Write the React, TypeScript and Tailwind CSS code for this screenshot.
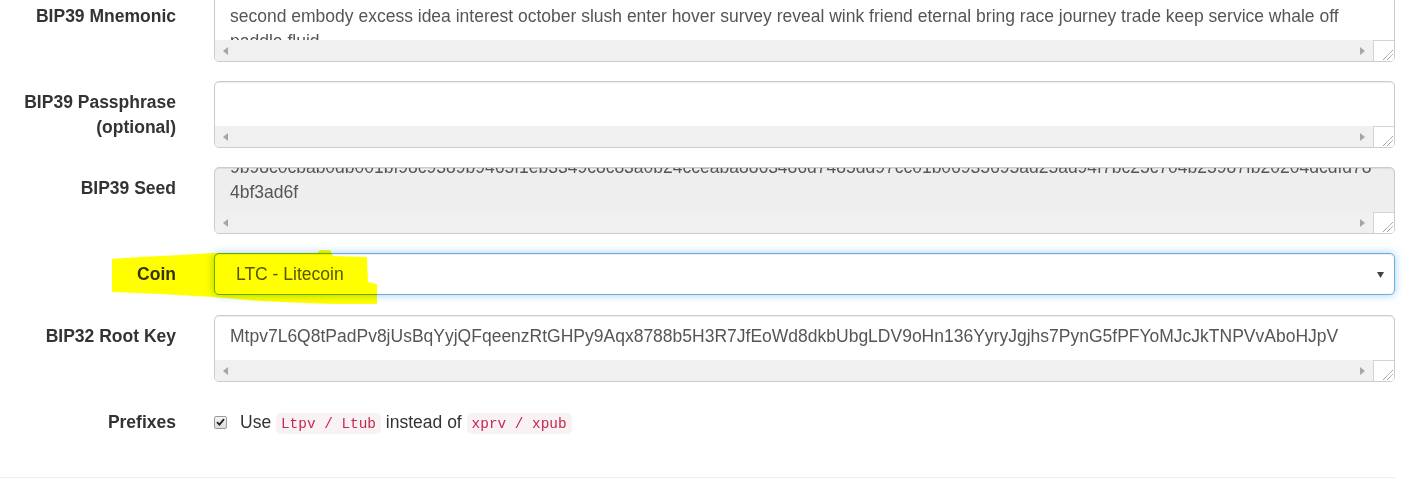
import type { ReactNode } from "react";

const MNEMONIC =
  "second embody excess idea interest october slush enter hover survey reveal wink friend eternal bring race journey trade keep service whale off paddle fluid";
const SEED_LINE =
  "9b98c0cbab0db001bf98c9389b9465f1eb3349c8c83a0b24cceaba8863486d7485dd97cc01b06935695ad25ad94f7bc25c704b25987fb20204dcdfd78";
const ROOT_KEY =
  "Mtpv7L6Q8tPadPv8jUsBqYyjQFqeenzRtGHPy9Aqx8788b5H3R7JfEoWd8dkbUbgLDV9oHn136YyryJgjhs7PynG5fPFYoMJcJkTNPVvAboHJpV";

export default function App() {
  return (
    <div className="relative h-[479px] w-[1408px] overflow-hidden bg-white font-['Liberation_Sans',Arial,sans-serif] text-[17.5px] leading-[25px] text-[#333]">
      <div className="-mt-[5px]">
        <FormRow label="BIP39 Mnemonic">
          <TextBox>
            <div className="px-[15px] pt-[7.5px] text-[#555]">{MNEMONIC}</div>
          </TextBox>
        </FormRow>

        <FormRow label={<>BIP39 Passphrase<br />(optional)</>}>
          <TextBox>
            <div />
          </TextBox>
        </FormRow>

        <FormRow label="BIP39 Seed">
          <TextBox readOnly>
            <div className="-mt-[13.5px] px-[15px] text-[#555]">
              <div className="overflow-hidden whitespace-nowrap">{SEED_LINE}</div>
              <div>4bf3ad6f</div>
            </div>
          </TextBox>
        </FormRow>

        <FormRow label="Coin" gap="mb-[20px]">
          <div className="relative flex h-[42px] items-center rounded-[5px] border border-[#66afe9] bg-white pl-[21px] text-[#555] shadow-[inset_0_1px_1px_rgba(0,0,0,0.075),0_0_8px_rgba(102,175,233,0.6)]">
            LTC - Litecoin
            <svg className="absolute right-[10px] top-[18px]" width="7" height="6" viewBox="0 0 7 6">
              <path d="M0 0 L7 0 L3.5 6 Z" fill="#444" />
            </svg>
          </div>
        </FormRow>

        <FormRow label="BIP32 Root Key">
          <TextBox>
            <div className="overflow-hidden whitespace-nowrap px-[15px] pt-[7.5px] text-[#555]">{ROOT_KEY}</div>
          </TextBox>
        </FormRow>

        <FormRow label="Prefixes" gap="mb-0">
          <div className="flex h-[42px] items-start pt-[8.75px]">
            <span className="mt-[6px] flex h-[13px] w-[13px] items-center justify-center rounded-[2px] border border-[#9a9a9a] bg-gradient-to-b from-[#f4f4f4] to-[#dcdcdc]">
              <svg width="9" height="8" viewBox="0 0 9 8">
                <path d="M1 4.2 L3.4 6.6 L8 1.2" fill="none" stroke="#222" strokeWidth="1.8" />
              </svg>
            </span>
            <span className="ml-[13px]">
              Use <Code>Ltpv / Ltub</Code> instead of <Code>xprv / xpub</Code>
            </span>
          </div>
        </FormRow>

        <div className="mr-[13px] mt-[34px] h-px bg-[#eee]" />
      </div>

      <svg className="pointer-events-none absolute left-0 top-0 mix-blend-multiply" width="1408" height="479">
        <polygon
          fill="#ffff00"
          points="112,259 140,257 180,255 213,253 317,253 320,250 330,250 333,256 367,257 368,282 377,284 377,304 330,304 260,301 213,297 160,294 112,292"
        />
      </svg>
    </div>
  );
}

function FormRow({ label, children, gap = "mb-[19px]" }: { label: ReactNode; children: ReactNode; gap?: string }) {
  return (
    <div className={`flex ${gap}`}>
      <label className="w-[176px] shrink-0 pt-[8.75px] text-right font-bold">{label}</label>
      <div className="ml-[38px] mr-[13px] min-w-0 flex-1">{children}</div>
    </div>
  );
}

function TextBox({ children, readOnly }: { children: ReactNode; readOnly?: boolean }) {
  return (
    <div
      className={`flex h-[67px] flex-col overflow-hidden rounded-[5px] border border-[#ccc] shadow-[inset_0_1px_1px_rgba(0,0,0,0.075)] ${
        readOnly ? "bg-[#eee]" : "bg-white"
      }`}
    >
      <div className="min-h-0 flex-1 overflow-hidden">{children}</div>
      <ScrollStrip />
    </div>
  );
}

function ScrollStrip() {
  return (
    <div className="flex h-[21px] shrink-0 items-center bg-[#f0f0f0]">
      <svg className="ml-[8px]" width="5" height="8" viewBox="0 0 5 8">
        <path d="M5 0 L0 4 L5 8 Z" fill="#a6a6a6" />
      </svg>
      <div className="flex-1" />
      <svg className="mr-[8px]" width="5" height="8" viewBox="0 0 5 8">
        <path d="M0 0 L5 4 L0 8 Z" fill="#a6a6a6" />
      </svg>
      <div className="h-full w-[21px] border-l border-t border-[#d4d4d4] bg-white">
        <svg width="20" height="20" viewBox="0 0 20 20">
          <path d="M9 19 L19 9 M13 19 L19 13" stroke="#777" strokeWidth="1" strokeDasharray="1 0.6" />
        </svg>
      </div>
    </div>
  );
}

function Code({ children }: { children: ReactNode }) {
  return (
    <code className="rounded-[5px] bg-[#f9f2f4] px-[5px] py-[2.5px] font-['Liberation_Mono','DejaVu_Sans_Mono',monospace] text-[14.4px] text-[#c7254e]">
      {children}
    </code>
  );
}
